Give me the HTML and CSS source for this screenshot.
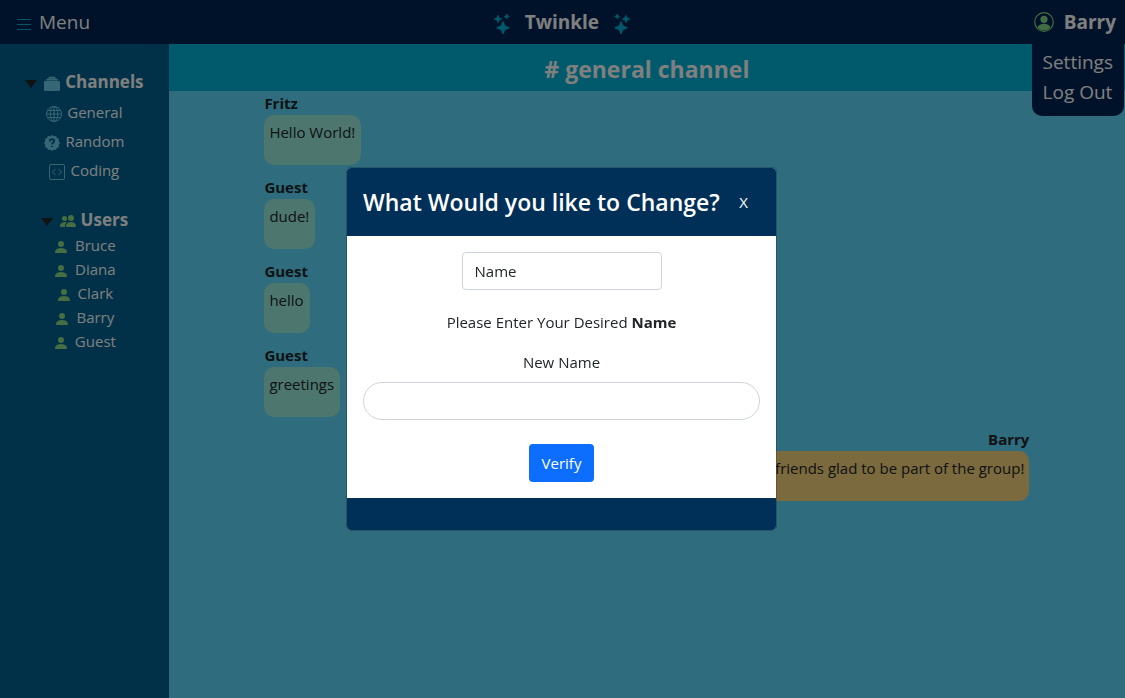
FILE: index.html
```html
<!DOCTYPE html>
<html lang="en">
<head>
<meta charset="utf-8">
<title>Twinkle</title>
<link rel="stylesheet" href="styles.css">
</head>
<body>
<svg class="sprite" aria-hidden="true">
  <symbol id="person" viewBox="0 0 16 16"><path d="M3 14s-1 0-1-1 1-4 6-4 6 3 6 4-1 1-1 1zm5-6a3 3 0 1 0 0-6 3 3 0 0 0 0 6"/></symbol>
  <symbol id="people" viewBox="0 0 16 16"><path d="M7 14s-1 0-1-1 1-4 5-4 5 3 5 4-1 1-1 1zm4-6a3 3 0 1 0 0-6 3 3 0 0 0 0 6m-5.784 6A2.24 2.24 0 0 1 5 13c0-1.355.68-2.75 1.936-3.72A6.300 6.300 0 0 0 5 9c-4 0-5 3-5 4s1 1 1 1zM4.500 8a2.500 2.500 0 1 0 0-5 2.500 2.500 0 0 0 0 5"/></symbol>
  <symbol id="stars" viewBox="0 0 16 16"><path d="M7.657 6.247c.11-.33.576-.33.686 0l.645 1.937a2.890 2.890 0 0 0 1.829 1.828l1.936.645c.33.11.33.576 0 .686l-1.937.645a2.890 2.890 0 0 0-1.828 1.829l-.645 1.936a.361.361 0 0 1-.686 0l-.645-1.937a2.890 2.890 0 0 0-1.828-1.828l-1.937-.645a.361.361 0 0 1 0-.686l1.937-.645a2.890 2.890 0 0 0 1.828-1.828zM3.794 1.148a.217.217 0 0 1 .412 0l.387 1.162c.173.518.579.924 1.097 1.097l1.162.387a.217.217 0 0 1 0 .412l-1.162.387A1.730 1.730 0 0 0 4.593 5.690l-.387 1.162a.217.217 0 0 1-.412 0L3.407 5.690A1.730 1.730 0 0 0 2.310 4.593l-1.162-.387a.217.217 0 0 1 0-.412l1.162-.387A1.730 1.730 0 0 0 3.407 2.310zM10.863.099a.145.145 0 0 1 .274 0l.258.774c.115.346.386.617.732.732l.774.258a.145.145 0 0 1 0 .274l-.774.258a1.160 1.160 0 0 0-.732.732l-.258.774a.145.145 0 0 1-.274 0l-.258-.774a1.160 1.160 0 0 0-.732-.732L9.100 2.137a.145.145 0 0 1 0-.274l.774-.258c.346-.115.617-.386.732-.732z" stroke="currentColor" stroke-width=".5"/></symbol>
</svg>

<header class="topbar">
  <button class="menu-button" type="button">
    <svg class="icon" viewBox="0 0 16 16"><path d="M1 3.500h14M1 8.500h14M1 13.500h14" fill="none" stroke="currentColor"/></svg>
    Menu
  </button>
  <div class="brand">
    <svg class="icon star"><use href="#stars"/></svg>
    <h1 class="brand-name">Twinkle</h1>
    <svg class="icon star flipped"><use href="#stars"/></svg>
  </div>
  <div class="account">
    <button class="account-button" type="button">
      <svg class="icon account-icon" viewBox="0 0 20 20"><circle cx="10" cy="10" r="9.300" fill="none" stroke="currentColor" stroke-width="1.200"/><circle cx="10" cy="7.300" r="3.600"/><path d="M3.500 15.500c1-2.500 3.200-3.700 6.500-3.700s5.500 1.200 6.500 3.700a8.500 8.500 0 0 1-13 0z"/></svg>
      Barry
    </button>
    <nav class="account-menu">
      <a href="#settings">Settings</a>
      <a href="#logout">Log Out</a>
    </nav>
  </div>
</header>

<div class="layout">
  <aside class="sidebar">
    <section class="group">
      <h2 class="group-title">
        <svg class="caret" viewBox="0 0 12 8"><path d="M0 0h12L6 8z"/></svg>
        <span class="label">
          <svg class="icon" viewBox="0 0 16 16"><path d="M0 6a1 1 0 0 1 1-1h14a1 1 0 0 1 1 1v8a1 1 0 0 1-1 1H1a1 1 0 0 1-1-1zM1.500 4.600L3 2.800h10l1.500 1.800zM4 2.400L5 .8h6l1 1.600z"/></svg>
          Channels
        </span>
      </h2>
      <a class="channel" href="#general">
        <svg class="icon" viewBox="0 0 16 16"><g fill="none" stroke="currentColor"><circle cx="8" cy="8" r="7.500"/><ellipse cx="8" cy="8" rx="3.800" ry="7.500"/><path d="M8 .5v15M.5 8h15M1.700 4.500h12.600M1.700 11.500h12.600"/></g></svg>
        General
      </a>
      <a class="channel" href="#random">
        <svg class="icon" viewBox="0 0 16 16"><path d="M8 0l1.800 1.200L12 1l1 2 2 1-.2 2.200L16 8l-1.200 1.800L15 12l-2 1-1 2-2.200-.2L8 16l-1.800-1.200L4 15l-1-2-2-1 .2-2.200L0 8l1.200-1.800L1 4l2-1 1-2 2.200.2z"/><path class="cutout" d="M5.800 6.200C5.900 4.800 6.800 4.300 8 4.300s2.200.7 2.200 1.800C10.200 7.600 8 7.600 8 9.300M8 10.700v1.300"/></svg>
        Random
      </a>
      <a class="channel" href="#coding">
        <svg class="icon" viewBox="0 0 16 16"><g fill="none" stroke="currentColor"><rect x=".5" y=".5" width="15" height="15" rx="1.500"/><path d="M6.500 5l-3 3 3 3M9.500 5l3 3-3 3"/></g></svg>
        Coding
      </a>
    </section>
    <section class="group">
      <h2 class="group-title users-title">
        <svg class="caret" viewBox="0 0 12 8"><path d="M0 0h12L6 8z"/></svg>
        <span class="label"><svg class="icon user-icon"><use href="#people"/></svg>Users</span>
      </h2>
      <ul class="users">
        <li><svg class="icon user-icon"><use href="#person"/></svg>Bruce</li>
        <li><svg class="icon user-icon"><use href="#person"/></svg>Diana</li>
        <li><svg class="icon user-icon"><use href="#person"/></svg>Clark</li>
        <li><svg class="icon user-icon"><use href="#person"/></svg>Barry</li>
        <li><svg class="icon user-icon"><use href="#person"/></svg>Guest</li>
      </ul>
    </section>
  </aside>

  <main class="chat">
    <h2 class="chat-title"># general channel</h2>
    <div class="messages">
      <article class="message"><strong>Fritz</strong><p class="bubble">Hello World!</p></article>
      <article class="message"><strong>Guest</strong><p class="bubble">dude!</p></article>
      <article class="message"><strong>Guest</strong><p class="bubble">hello</p></article>
      <article class="message"><strong>Guest</strong><p class="bubble">greetings</p></article>
      <article class="message own"><strong>Barry</strong><p class="bubble">Hello friends glad to be part of the group!</p></article>
    </div>
  </main>
</div>

<div class="backdrop">
  <form class="modal" role="dialog" aria-labelledby="modal-title">
    <div class="modal-header">
      <h2 class="modal-title" id="modal-title">What Would you like to Change?</h2>
      <button class="close" type="button" aria-label="Close">X</button>
    </div>
    <div class="modal-body">
      <select class="field field-select" aria-label="Setting to change"><option>Name</option></select>
      <p class="hint">Please Enter Your Desired <strong>Name</strong></p>
      <label class="field-label" for="new-name">New Name</label>
      <input class="field field-round" id="new-name" type="text">
      <button class="verify" type="submit">Verify</button>
    </div>
    <div class="modal-footer"></div>
  </form>
</div>
</body>
</html>
```
FILE: styles.css
```css
* { box-sizing: border-box; }
body {
  margin: 0;
  min-height: 100vh;
  display: flex;
  flex-direction: column;
  font: 15px/24px "Segoe UI", "Open Sans", sans-serif;
  color: #212529;
}
h1, h2, p, ul { margin: 0; padding: 0; }
button { font: inherit; color: inherit; background: none; border: 0; padding: 0; }
a { color: inherit; text-decoration: none; }
.sprite { display: none; }
.icon { width: 16px; height: 16px; flex: none; fill: currentColor; }

.topbar {
  display: flex;
  align-items: center;
  justify-content: space-between;
  height: 44px;
  padding: 0 9px 0 16px;
  background: #002452;
  color: #fff;
  font-size: 19px;
}
.menu-button { display: flex; align-items: center; gap: 7px; }
.menu-button .icon { color: #00b4d8; margin-top: 4px; }
.brand { display: flex; align-items: center; gap: 12px; }
.brand-name { font-size: 19px; font-weight: 700; }
.star { width: 20px; height: 20px; color: #00b4d8; margin-top: 4px; }
.flipped { transform: scaleX(-1); }
.account { position: relative; }
.account-button { display: flex; align-items: center; gap: 10px; font-weight: 700; }
.account-icon { width: 20px; height: 20px; color: #84d984; }
.account-menu {
  position: absolute;
  top: 34px;
  right: -8px;
  display: flex;
  flex-direction: column;
  padding: 3px 11px 9px;
  border-radius: 0 0 10px 10px;
  background: #002452;
  line-height: 30px;
  white-space: nowrap;
}

.layout { flex: 1; display: grid; grid-template-columns: 15% 1fr; }
.sidebar { padding-top: 24px; background: #006390; color: #fff; }
.group { margin-bottom: 21px; }
.group-title {
  display: flex;
  justify-content: center;
  align-items: center;
  gap: 7px;
  margin-bottom: 2px;
  font-size: 17px;
  line-height: 28px;
}
.caret { width: 12px; height: 8px; margin-top: 4px; fill: #212529; }
.label, .channel, .users li { display: flex; justify-content: center; align-items: center; gap: 5px; }
.sidebar .icon { margin-top: 3px; }
.label .icon, .channel .icon { color: #68cce8; }
.channel { line-height: 29px; }
.cutout { fill: none; stroke: #006390; stroke-width: 2; }
.users-title { margin-bottom: 0; line-height: 27px; }
.users { list-style: none; }
.users li { gap: 6px; }
.users .user-icon, .label .user-icon { color: #8cdc84; }

.chat { background: #5cd8fc; }
.chat-title {
  padding: 8px 0 5px;
  background: #00b4d8;
  color: #fff;
  text-align: center;
  font-size: 23px;
  line-height: 34px;
}
.messages { padding: 0 10%; }
.message { display: flex; flex-direction: column; align-items: flex-start; margin-bottom: 10px; }
.own { align-items: flex-end; }
.bubble {
  min-height: 50px;
  padding: 5px 6px 5px 5px;
  border-radius: 10px;
  background: #98ecdc;
}
.own .bubble { padding-right: 5px; background: #f4d47c; }

.backdrop {
  position: fixed;
  inset: 0;
  display: flex;
  align-items: center;
  justify-content: center;
  padding-right: 2px;
  background: rgba(0, 0, 0, 0.5);
}
.modal {
  width: 431px;
  max-width: 100%;
  border: 1px solid rgba(0, 0, 0, 0.2);
  border-radius: 5px;
  overflow: hidden;
  background: #fff;
  background-clip: padding-box;
}
.modal-header {
  display: flex;
  align-items: center;
  justify-content: space-between;
  padding: 16px 28px 16px 16px;
  background: #003058;
  color: #fff;
}
.modal-title { font-size: 23px; font-weight: 600; line-height: 36px; white-space: nowrap; }
.modal-body { display: flex; flex-direction: column; align-items: center; padding: 16px; }
.field {
  width: 100%;
  height: 38px;
  padding: 0 12px;
  border: 1px solid #ced4da;
  border-radius: 4px;
  background: #fff;
  color: #212529;
  font: inherit;
  appearance: none;
}
.field-select { width: 200px; }
.hint { margin: 20px 0 16px; }
.field-label { margin-bottom: 8px; }
.field-round { border-radius: 19px; }
.verify {
  height: 38px;
  margin-top: 24px;
  padding: 0 13px;
  border-radius: 4px;
  background: #0d6efd;
  color: #fff;
}
.modal-footer { height: 32px; background: #003058; }
```
